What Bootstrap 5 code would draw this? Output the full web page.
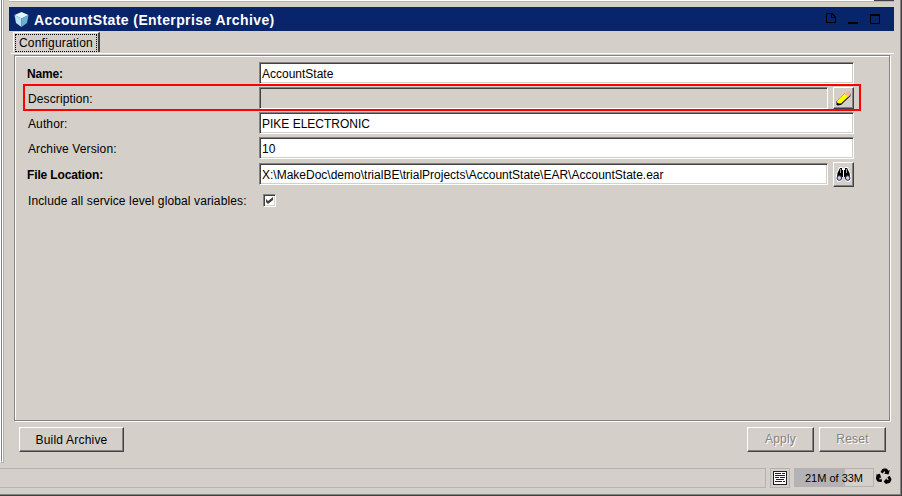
<!DOCTYPE html>
<html lang="en">
<head>
<meta charset="utf-8">
<title>AccountState (Enterprise Archive)</title>
<link href="https://cdn.jsdelivr.net/npm/bootstrap@5.3.0/dist/css/bootstrap.min.css" rel="stylesheet">
<style>
*{border-radius:0!important}
body{width:902px;height:496px;overflow:hidden;background:#d4cfc8;color:#000;font:12px/16px "Liberation Sans",Arial,sans-serif}
.window{width:902px;height:496px;border-right:1px solid #424142;border-bottom:1px solid #424142;box-shadow:inset -1px -1px #848284}
.workspace{height:463px}
.gutter{width:4px;margin-right:5px;border-left:1px solid #fff;border-right:1px solid #b5b2b5;border-bottom:1px solid #b5b2b5;height:463px}
.gutter div{width:2px;height:462px;border-left:1px solid #848284;border-right:1px solid #fff;border-bottom:1px solid #fff}
.editor{width:885px}
.top-strip{height:2px;margin-bottom:5px;background:#fff;border-bottom:1px solid #b5b2b5}
.top-strip div{width:20px;height:1px;background:#424142}
.title-strip{height:24px;background:#08246b;color:#fff;padding:1px 14px 0 5px}
.title-strip h1{font-size:14px;line-height:20px;letter-spacing:.4px;margin:0 0 0 5px}
.title-strip .win-icons{gap:12px;margin-top:-3px}
.tabs{height:23px;margin-left:2px;padding-left:2px;padding-top:1px;border-bottom:1px solid #fff}
.tab-item{width:87px;height:20px;padding:1px;border:0 solid;border-width:1px 2px 0 1px;border-color:#fff #424142 #fff #fff;background:none;letter-spacing:.2px;line-height:16px;color:#000}
.tab-item span{display:block;height:18px;border:1px dotted #000;padding-left:3px;text-align:left;white-space:nowrap}
.panel{width:876px;height:366px;margin:1px 0 0 5px;border:1px solid #848284;box-shadow:inset 1px 1px #fff,1px 1px #fff}
.form-area{padding:4px 0 0 8px}
.form-line{height:25px;padding-left:5px;width:838px;border:0 solid red}
.form-line label{width:231px;letter-spacing:.12px;white-space:nowrap;padding-top:2px}
.form-line label.strong{font-weight:bold;letter-spacing:-.14px;margin-left:-1px;width:232px}
.highlight{border:2px solid red;height:27px;margin-top:-1px;margin-bottom:-1px;padding:1px 0 0 3px}
.location{height:27px;padding-top:2px}
.location .field{margin-bottom:1px}
.include{height:27px}
.location label,.include label{padding:0}
.field{height:22px;width:595px;border:1px solid;border-color:#848284 #fff #fff #848284;box-shadow:inset 1px 1px #424142,inset -1px -1px #d4cfc8;background:#fff;padding:2px 2px 0;font-size:12px;line-height:18px;color:#000;outline:0;letter-spacing:0}
.field.short{width:569px}
.field.off{background:#d4cfc8}
.raised{border:1px solid;border-color:#fff #424142 #424142 #fff;box-shadow:inset -1px -1px #848284;background:#d4cfc8;padding:0;font-size:12px;line-height:16px;color:#000;letter-spacing:.2px}
.tool{width:21px;height:22px;margin-left:5px}
.tool.tall{height:25px}
.check{width:13px;height:13px;margin-left:4px;border:1px solid;border-color:#848284 #fff #fff #848284;box-shadow:inset 1px 1px #424142,inset -1px -1px #d4cfc8;background:#fff}
.actions{height:25px;margin:6px 8px 0 10px;gap:5px}
.actions .raised{height:25px}
.raised:disabled{color:#848284;text-shadow:1px 1px #fff;opacity:1}
.w-build{width:105px}.w-apply,.w-reset{width:67px;padding-bottom:1px}
.status{height:20px;margin-top:5px;gap:4px}
.message{width:766px;height:20px;border:1px solid #b5b2b5;border-left:0}
.log{width:20px;height:20px;border:1px solid #b5b2b5}
.memory{width:80px;height:19px;border:1px solid #b5b2b5;background:linear-gradient(90deg,#b5b2b5 50px,transparent 50px);font-size:11px;line-height:18px;text-align:center;white-space:nowrap}
.recycle{margin-left:-2px}
svg{display:block;flex:none}
</style>
<script src="https://cdn.jsdelivr.net/npm/bootstrap@5.3.0/dist/js/bootstrap.bundle.min.js"></script>
</head>
<body>
<div class="window">
 <div class="workspace d-flex">
  <div class="gutter"><div></div></div>
  <main class="editor">
   <div class="top-strip d-flex justify-content-end"><div></div></div>
   <header class="title-strip d-flex align-items-center">
    <svg width="15" height="16" viewBox="0 0 15 16"><path fill="#e2f8fc" d="M7.500 0 14.500 3 7.500 6.500.5 3z"/><path fill="#b5e3f3" d="M.5 3 7.500 6.500V15L2 11z"/><path fill="#6aaed2" d="M7.500 6.500 14.500 3 13 11 7.500 15z"/></svg>
    <h1 class="fw-bold">AccountState (Enterprise Archive)</h1>
    <div class="win-icons ms-auto d-flex">
     <svg width="10" height="12" viewBox="0 0 10 12" fill="none" stroke="#000" shape-rendering="crispEdges"><path d="M.5 1.500H6L9.500 5V10.500H.5zM5.500 1.500V5.500H9.500"/></svg>
     <svg width="10" height="12" viewBox="0 0 10 12"><path d="M0 10h10v2H0z"/></svg>
     <svg width="10" height="12" viewBox="0 0 10 12"><path fill-rule="evenodd" d="M0 2h10v10H0zM1 4v7h8V4z"/></svg>
    </div>
   </header>
   <div class="tabs"><button class="tab-item"><span>Configuration</span></button></div>
   <section class="panel">
    <form class="form-area">
     <div class="form-line d-flex align-items-center"><label class="strong">Name:</label><input class="field" value="AccountState"></div>
     <div class="form-line highlight d-flex align-items-center"><label>Description:</label><input class="field short off" disabled><button type="button" class="raised tool d-flex align-items-center justify-content-center" aria-label="Edit"><svg width="15" height="15" viewBox="0 0 15 15"><path fill="#848284" d="M3 15 15 5V2L5 12 1 14v1z"/><path fill="#000" d="M.5 10.500 9 2l5 3-9 9H.5z"/><path fill="#ff0" d="M1 10 9 2l4 3-8 7.500H3L1 11.500z"/><path fill="#ffb2a5" d="M8.500 2.500 11 0h3v4l-2 2z"/></svg></button></div>
     <div class="form-line d-flex align-items-center"><label>Author:</label><input class="field" value="PIKE ELECTRONIC"></div>
     <div class="form-line d-flex align-items-center"><label>Archive Version:</label><input class="field" value="10"></div>
     <div class="form-line location d-flex align-items-center"><label class="strong">File Location:</label><input class="field short" value="X:\MakeDoc\demo\trialBE\trialProjects\AccountState\EAR\AccountState.ear"><button type="button" class="raised tool tall d-flex align-items-center justify-content-center" aria-label="Browse"><svg width="15" height="15" viewBox="0 0 15 15"><path fill="#fff" d="M3 0h3l1.500 2L9 0h3l3 8v5l-2 2h-2l-2-2v-3H6v3l-2 2H2l-2-2V8z"/><path d="M4 1h2v2h1v7H5.500L4 8.500 1 10l.5-4L3 3zM9 1h2l1 2 1.500 3 .5 4-3-1.500L9.500 10H8V3h1z"/><path stroke="#9c9a9c" d="M4.500 2v4M10.500 2v4"/><circle cx="3.300" cy="11" r="2.300" fill="#ceceff" stroke="#222"/><circle cx="11.700" cy="11" r="2.300" fill="#ceceff" stroke="#222"/></svg></button></div>
     <div class="form-line include d-flex align-items-center"><label>Include all service level global variables:</label><span class="check"><svg width="11" height="11" viewBox="0 0 11 11"><path fill="#424142" d="M2 4 4 6 9 2v3L4 9 2 7z"/></svg></span></div>
    </form>
   </section>
   <div class="actions d-flex"><button class="raised w-build">Build Archive</button><button class="raised w-apply ms-auto" disabled>Apply</button><button class="raised w-reset" disabled>Reset</button></div>
  </main>
 </div>
 <footer class="status d-flex">
  <div class="message"></div>
  <div class="log d-flex align-items-center justify-content-center"><svg width="14" height="14" viewBox="0 0 14 14" shape-rendering="crispEdges"><path fill="#fff" stroke="#222" d="M.5.5h13v13H.5z"/><path stroke="#222" d="M2 2.500h6M9 2.500h3M2 4.500h10M2 6.500h4M7 6.500h5M3 8.500h8M2 10.500h7M10 10.500h2"/></svg></div>
  <div class="memory">21M of 33M</div>
  <svg class="recycle" width="16" height="16" viewBox="0 0 16 16"><g><path id="arm" d="M4.500 4 6.200 1.200Q6.800.5 8 .5h2Q11 .5 11.500 1.500l1 1.300 1.300-.8-1.300 4.500-4.500-1 1.300-.8L8.300 3 6.800 5.400z"/><use href="#arm" transform="rotate(120 8 8.600)"/><use href="#arm" transform="rotate(240 8 8.600)"/></g></svg>
 </footer>
</div>
</body>
</html>
